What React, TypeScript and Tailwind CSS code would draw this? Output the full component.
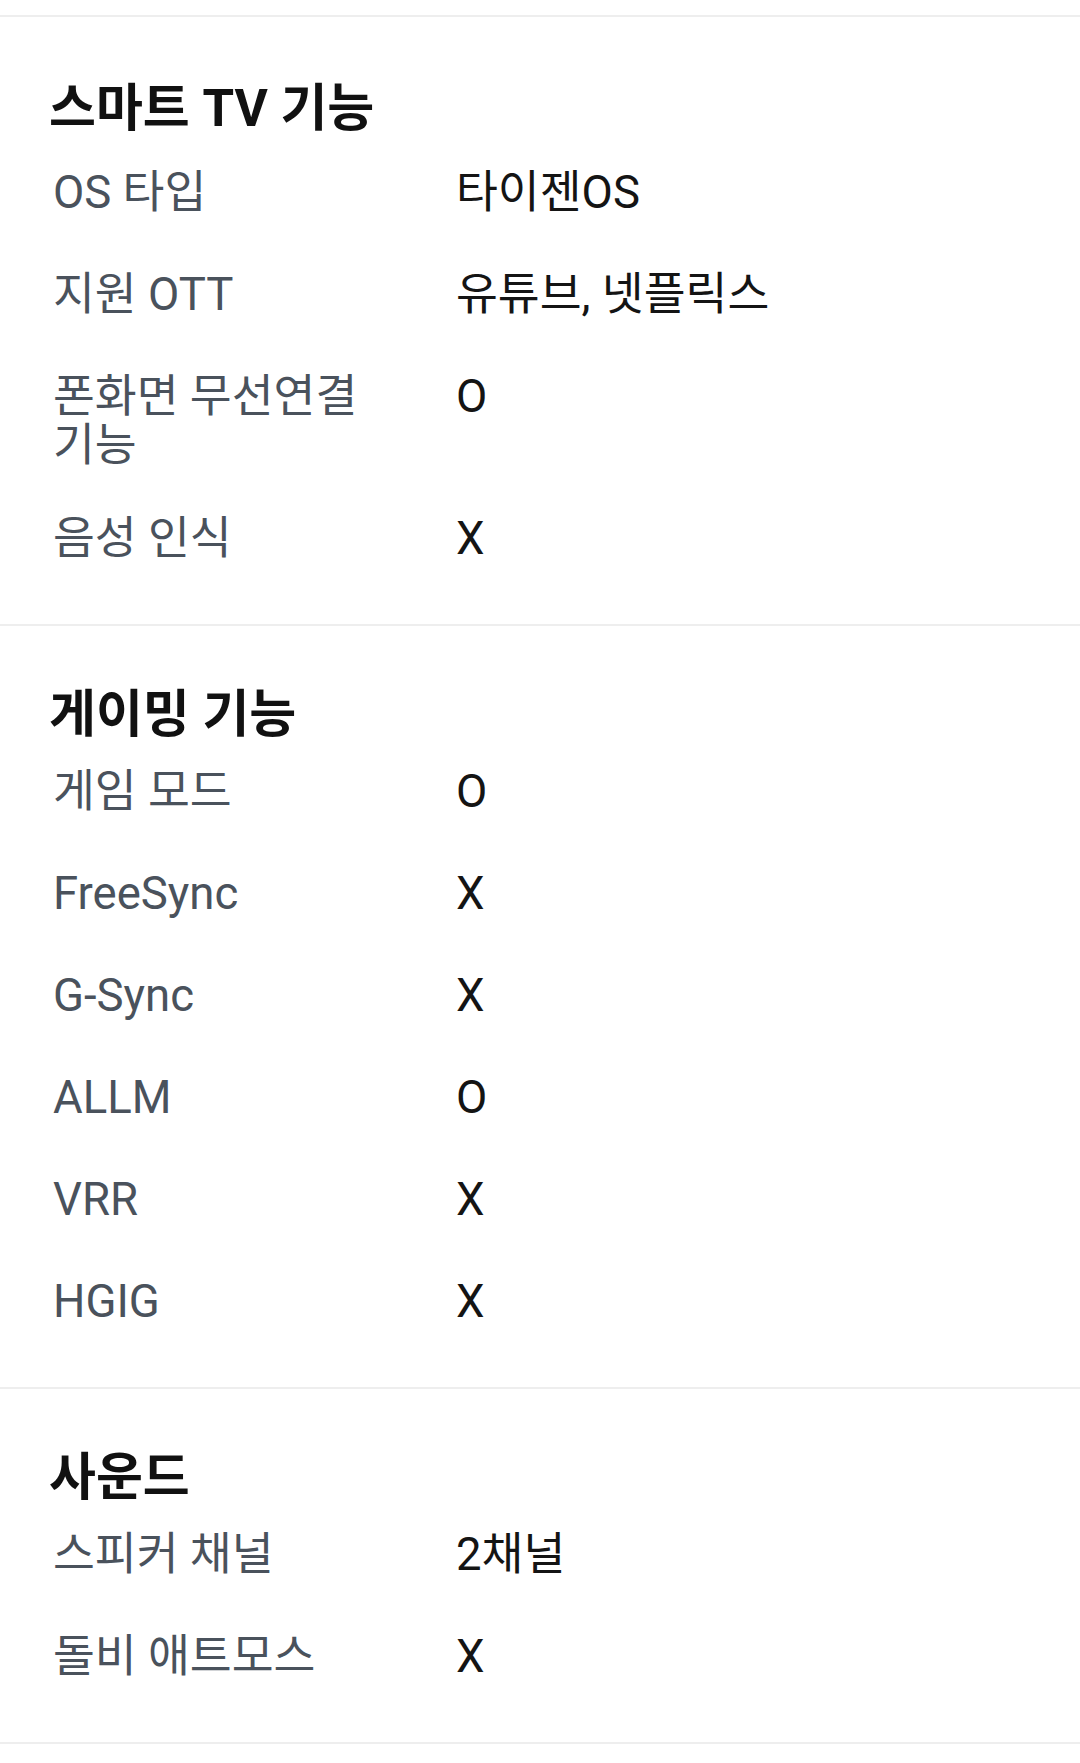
const sections = [
  {
    title: "스마트 TV 기능",
    first: true,
    rows: [
      ["OS 타입", "타이젠OS"],
      ["지원 OTT", "유튜브, 넷플릭스"],
      ["폰화면 무선연결 기능", "O"],
      ["음성 인식", "X"],
    ],
  },
  {
    title: "게이밍 기능",
    rows: [
      ["게임 모드", "O"],
      ["FreeSync", "X"],
      ["G-Sync", "X"],
      ["ALLM", "O"],
      ["VRR", "X"],
      ["HGIG", "X"],
    ],
  },
  {
    title: "사운드",
    rows: [
      ["스피커 채널", "2채널"],
      ["돌비 애트모스", "X"],
    ],
  },
];

const App = () => {
  return (
    <main className="min-h-[1763px] bg-white font-['Roboto','Noto_Sans_CJK_KR',sans-serif]">
      <div className="h-[15px]" />
      {sections.map((s) => (
        <section
          key={s.title}
          className={`border-t-2 border-[#eeeeee] pb-[34px] ${s.first ? "pt-[66px]" : "pt-[63px]"}`}
        >
          <h2
            className={`pl-[49px] text-[51px] leading-[52px] font-bold text-[#111111] ${s.first ? "mb-[7px]" : ""}`}
          >
            {s.title}
          </h2>
          {/* spec rows */}
          <div className="pl-[53px]">
            {s.rows.map(([label, value]) => (
              <div key={label} className="flex min-h-[102px] pt-[26px] pb-[18px]">
                <div className="w-[403px] shrink-0 pr-[40px] text-[45.5px] leading-[49px] break-keep text-[#4a525c]">
                  {label}
                </div>
                <div className="flex-1 text-[45.5px] leading-[49px] text-[#141414]">{value}</div>
              </div>
            ))}
          </div>
        </section>
      ))}
      <div className="border-t-2 border-[#eeeeee]" />
    </main>
  );
};

export default App;
